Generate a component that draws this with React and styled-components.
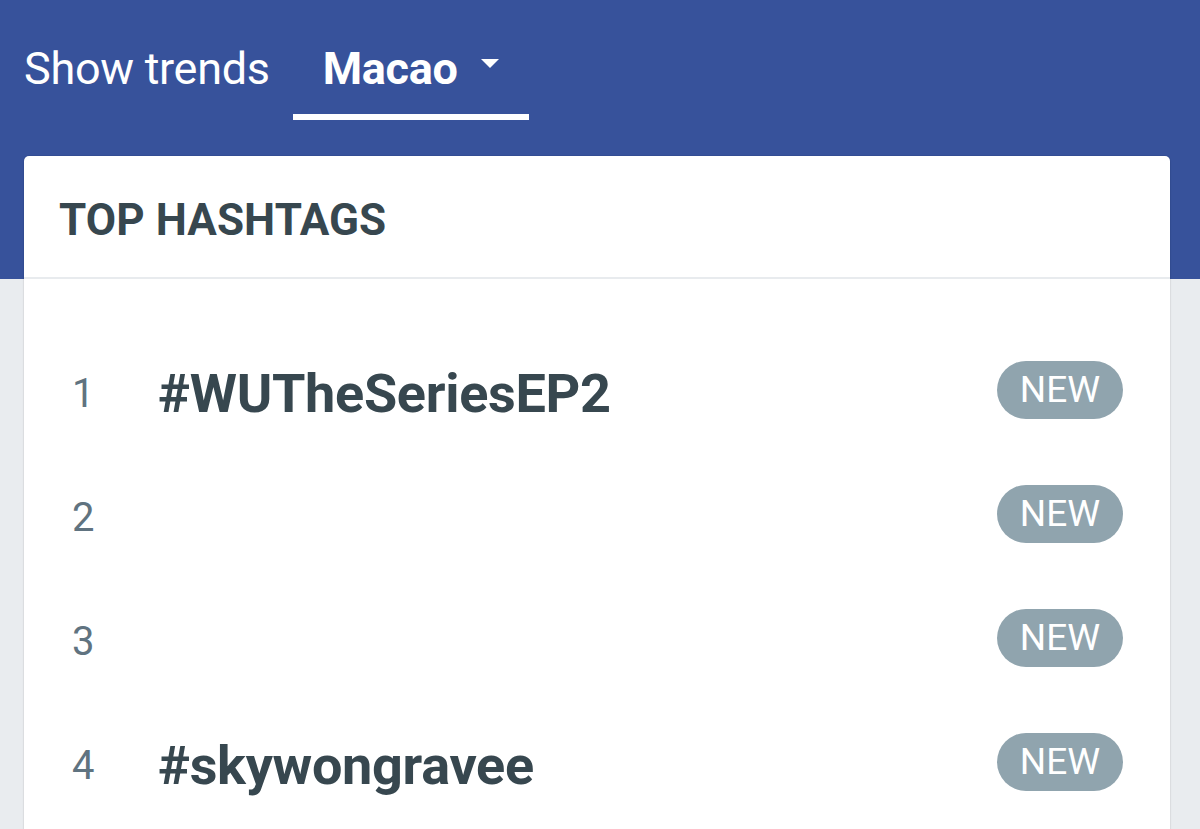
import React from "react";
import styled, { createGlobalStyle } from "styled-components";

const GlobalStyle = createGlobalStyle`
  html, body {
    margin: 0;
    padding: 0;
    background: #e9ecef;
    font-family: Roboto, "Liberation Sans", Arial, sans-serif;
  }
  * { box-sizing: border-box; }
`;

const Page = styled.div`
  min-height: 829px;
  background: linear-gradient(to bottom, #37529b 0, #37529b 279px, #e9ecef 279px);
  padding: 0 30px 0 24px;
  overflow: hidden;
`;

const Nav = styled.nav`
  display: flex;
  align-items: stretch;
  height: 120px;
  margin-bottom: 36px;
`;

const Tab = styled.div`
  display: flex;
  align-items: center;
  gap: 23px;
  height: 120px;
  padding: 22px ${(p) => (p.$active ? "30px" : "0")} 0;
  margin-right: ${(p) => (p.$active ? "0" : "23px")};
  border-bottom: 6px solid ${(p) => (p.$active ? "#ffffff" : "transparent")};
  color: #ffffff;
  font-size: 45px;
  font-weight: ${(p) => (p.$active ? 700 : 400)};
  letter-spacing: -0.3px;
  white-space: nowrap;
`;

const Caret = styled.span`
  display: inline-block;
  width: 0;
  height: 0;
  border-left: 9px solid transparent;
  border-right: 9px solid transparent;
  border-top: 9px solid #ffffff;
  margin-top: -10px;
`;

const Card = styled.section`
  width: 1146px;
  background: #ffffff;
  border-radius: 5px 5px 0 0;
  box-shadow: 0 0 0 1px rgba(0, 0, 0, 0.04), 0 1px 3px rgba(0, 0, 0, 0.06);
  min-height: 700px;
`;

const CardHeader = styled.header`
  height: 123px;
  display: flex;
  align-items: center;
  padding: 6px 35px 0;
  border-bottom: 2px solid #e8ebee;
`;

const CardTitle = styled.h2`
  margin: 0;
  font-size: 44px;
  font-weight: 700;
  color: #37474f;
  letter-spacing: 0.1px;
`;

const List = styled.ol`
  list-style: none;
  margin: 0;
  padding: 52px 0 0;
`;

const Row = styled.li`
  display: flex;
  align-items: center;
  height: 124px;
  padding: 0 47px 0 46px;
`;

const Rank = styled.span`
  width: 88px;
  padding-left: 2px;
  font-size: 40px;
  color: #607380;
  font-weight: 400;
`;

const Tag = styled.span`
  flex: 1;
  font-size: 54px;
  font-weight: 700;
  color: #37474f;
  letter-spacing: -0.3px;
`;

const Badge = styled.span`
  display: inline-flex;
  align-items: center;
  justify-content: center;
  height: 58px;
  width: 126px;
  margin-bottom: 6px;
  border-radius: 29px;
  background: #90a4ae;
  color: #ffffff;
  font-size: 37px;
  font-weight: 400;
  padding-bottom: 1px;
`;

const rows = [
  { rank: 1, tag: "#WUTheSeriesEP2" },
  { rank: 2, tag: "" },
  { rank: 3, tag: "" },
  { rank: 4, tag: "#skywongravee" },
];

export default function App() {
  return (
    <>
      <GlobalStyle />
      <Page>
        <Nav>
          <Tab>Show trends</Tab>
          <Tab $active>
            Macao
            <Caret />
          </Tab>
        </Nav>
        <Card>
          <CardHeader>
            <CardTitle>TOP HASHTAGS</CardTitle>
          </CardHeader>
          <List>
            {rows.map((r) => (
              <Row key={r.rank}>
                <Rank>{r.rank}</Rank>
                <Tag>{r.tag}</Tag>
                <Badge>NEW</Badge>
              </Row>
            ))}
          </List>
        </Card>
      </Page>
    </>
  );
}
